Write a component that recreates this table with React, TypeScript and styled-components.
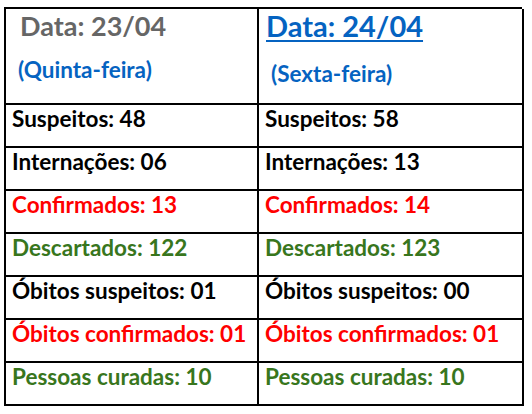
import * as React from 'react';
import styled, { createGlobalStyle } from 'styled-components';

const GlobalStyle = createGlobalStyle`
  html, body {
    margin: 0;
    padding: 0;
    background: #ffffff;
  }
  body {
    font-family: Lato, "Open Sans", sans-serif;
  }
`;

const Page = styled.div`
  width: 532px;
  height: 414px;
  padding: 7px 0 0 4px;
  box-sizing: border-box;
`;

const Table = styled.div`
  width: 518px;
  display: grid;
  grid-template-columns: 253px 265px;
  grid-template-rows: 96px repeat(7, 43px);
  border-top: 2px solid #000;
  border-left: 2px solid #000;
  box-sizing: border-box;
`;

const Cell = styled.div`
  border-right: 2px solid #000;
  border-bottom: 2px solid #000;
  box-sizing: border-box;
  padding: 1px 0 0 6px;
  font-weight: 700;
  font-size: 22.5px;
  line-height: 26px;
  color: ${p => p.color || '#000'};
  white-space: nowrap;
`;

const HeaderCell = styled(Cell)`
  display: flex;
  flex-direction: column;
  padding: 0 0 0 14px;
`;

const DateTitle = styled.div<{ $current?: boolean }>`
  font-size: ${p => (p.$current ? '29px' : '27px')};
  line-height: 34px;
  color: ${p => (p.$current ? '#0563c1' : '#666666')};
  text-decoration: ${p => (p.$current ? 'underline' : 'none')};
  text-decoration-thickness: 2px;
  text-underline-offset: 3px;
  margin-left: ${p => (p.$current ? '-7px' : '0')};
`;

const Weekday = styled.div<{ $shift?: number }>`
  font-size: 22.5px;
  line-height: 26px;
  color: #0563c1;
  margin-top: ${p => p.$shift ?? 14}px;
  margin-left: -2px;
`;

const RED = '#ff0000';
const GREEN = '#38761d';

const rows: [string, string, string][] = [
  ['Suspeitos: 48', 'Suspeitos: 58', '#000'],
  ['Internações: 06', 'Internações: 13', '#000'],
  ['Confirmados: 13', 'Confirmados: 14', RED],
  ['Descartados: 122', 'Descartados: 123', GREEN],
  ['Óbitos suspeitos: 01', 'Óbitos suspeitos: 00', '#000'],
  ['Óbitos confirmados: 01', 'Óbitos confirmados: 01', RED],
  ['Pessoas curadas: 10', 'Pessoas curadas: 10', GREEN],
];

export default function App() {
  return (
    <Page>
      <GlobalStyle />
      <Table>
        <HeaderCell>
          <DateTitle>Data: 23/04</DateTitle>
          <Weekday>(Quinta-feira)</Weekday>
        </HeaderCell>
        <HeaderCell>
          <DateTitle $current>Data: 24/04</DateTitle>
          <Weekday $shift={18}>(Sexta-feira)</Weekday>
        </HeaderCell>
        {rows.map(([left, right, color]) => (
          <React.Fragment key={left}>
            <Cell color={color}>{left}</Cell>
            <Cell color={color}>{right}</Cell>
          </React.Fragment>
        ))}
      </Table>
    </Page>
  );
}
